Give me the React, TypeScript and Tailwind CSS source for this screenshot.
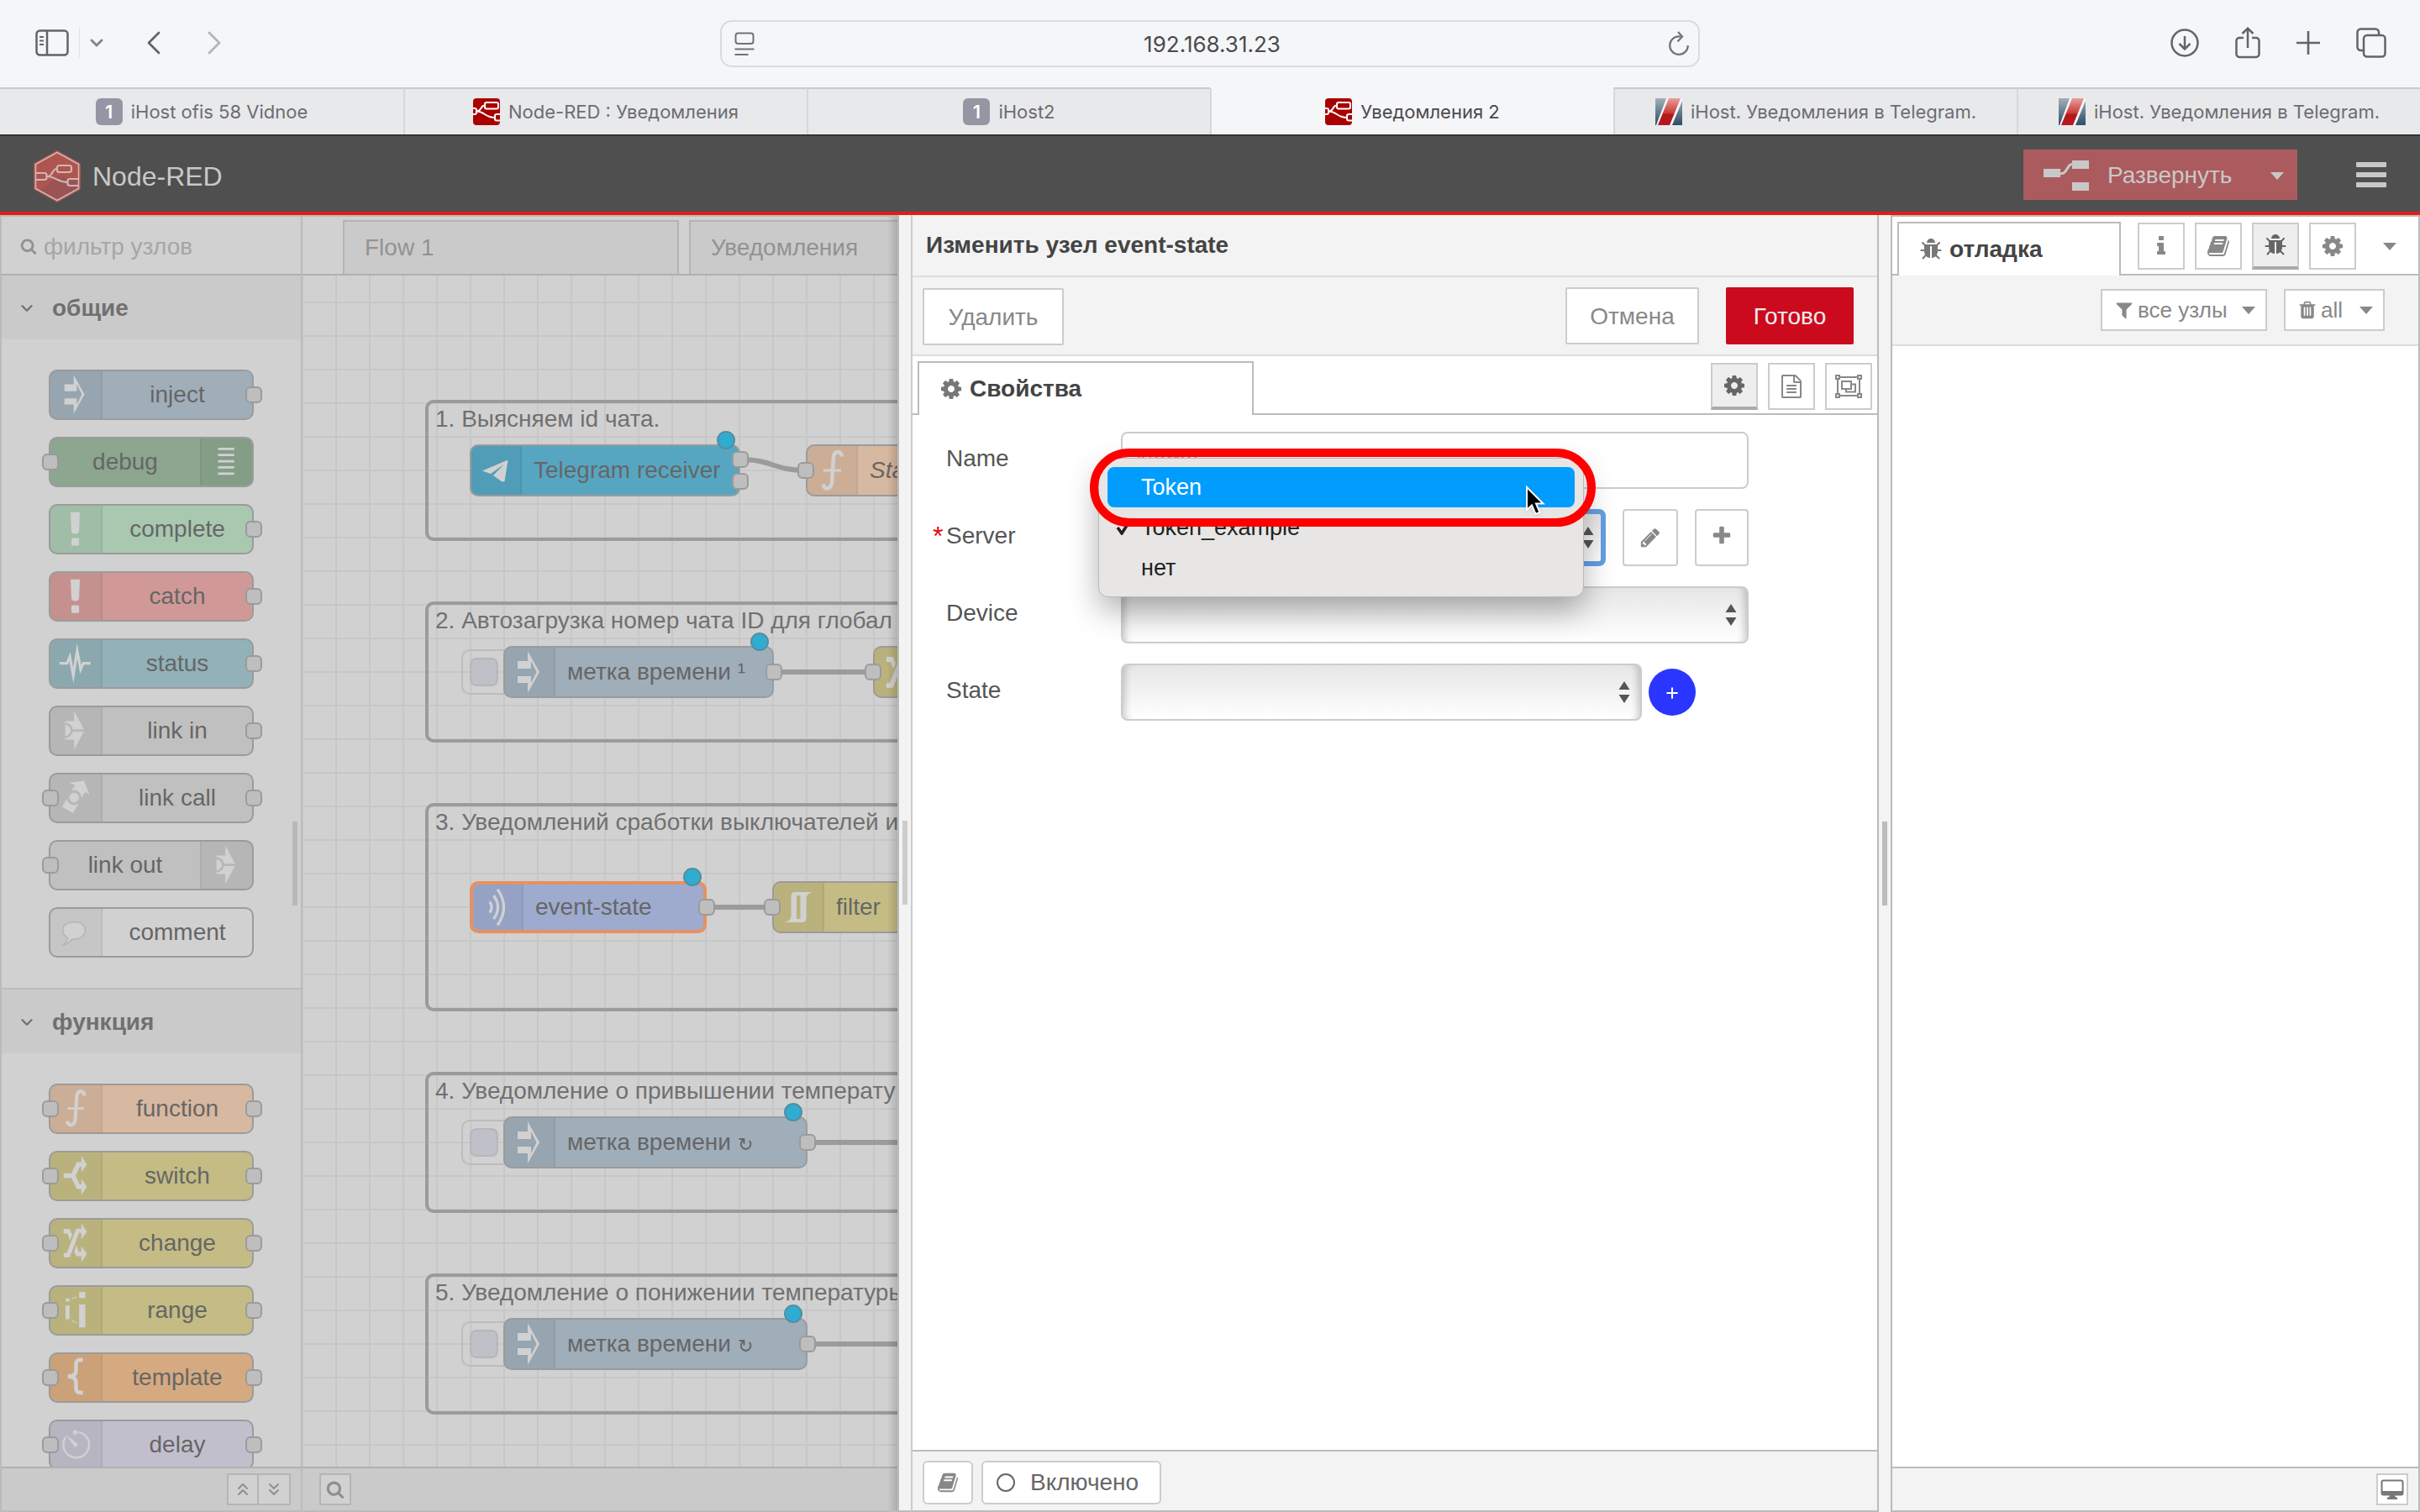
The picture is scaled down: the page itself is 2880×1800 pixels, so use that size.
import type { ReactNode } from "react";
import {
  ChevronDown,
  ChevronLeft,
  ChevronRight,
  ChevronsDown,
  ChevronsUp,
  Plus,
} from "lucide-react";

type IconName =
  | "inject"
  | "debug"
  | "alert"
  | "status"
  | "link"
  | "linkCall"
  | "comment"
  | "function"
  | "switch"
  | "change"
  | "range"
  | "template"
  | "delay"
  | "telegram"
  | "event"
  | "filter";

interface PaletteNode {
  label: string;
  icon: IconName;
  color: string;
  input?: boolean;
  output?: boolean;
  iconRight?: boolean;
}

interface FlowNode {
  label: string;
  icon: IconName;
  color: string;
  x: number;
  y: number;
  width: number;
  inputs?: number;
  outputs?: number;
  button?: boolean;
  italic?: boolean;
  selected?: boolean;
  changed?: boolean;
  repeat?: boolean;
}

const COMMON_NODES: PaletteNode[] = [
  { label: "inject", icon: "inject", color: "bg-[#a0aeba]", output: true },
  { label: "debug", icon: "debug", color: "bg-[#8ca68f]", input: true, iconRight: true },
  { label: "complete", icon: "alert", color: "bg-[#a8c8b0]", output: true },
  { label: "catch", icon: "alert", color: "bg-[#d09997]", output: true },
  { label: "status", icon: "status", color: "bg-[#92b1b8]", output: true },
  { label: "link in", icon: "link", color: "bg-[#c0c0c0]", output: true },
  { label: "link call", icon: "linkCall", color: "bg-[#c0c0c0]", input: true, output: true },
  { label: "link out", icon: "link", color: "bg-[#c0c0c0]", input: true, iconRight: true },
  { label: "comment", icon: "comment", color: "bg-[#d1d1d1]" },
];

const FUNCTION_NODES: PaletteNode[] = [
  { label: "function", icon: "function", color: "bg-[#d7b8a0]", input: true, output: true },
  { label: "switch", icon: "switch", color: "bg-[#c4bc84]", input: true, output: true },
  { label: "change", icon: "change", color: "bg-[#c4bc84]", input: true, output: true },
  { label: "range", icon: "range", color: "bg-[#c4bc84]", input: true, output: true },
  { label: "template", icon: "template", color: "bg-[#d5aa80]", input: true, output: true },
  { label: "delay", icon: "delay", color: "bg-[#c2bfcd]", input: true, output: true },
];

// Canvas coordinates, origin at the top left corner of the flow
const GROUPS = [
  { label: "1. Выясняем id чата.", y: 148, height: 168 },
  { label: "2. Автозагрузка номер чата ID для глобал", y: 388, height: 168 },
  { label: "3. Уведомлений сработки выключателей и", y: 628, height: 248 },
  { label: "4. Уведомление о привышении температу", y: 948, height: 168 },
  { label: "5. Уведомление о понижении температуры", y: 1188, height: 168 },
];

const WIRES = [
  "M520 219 C560 219 560 232 600 232",
  "M560 472 H680",
  "M480 752 H560",
  "M600 1032 H760",
  "M600 1272 H760",
];

const FLOW_NODES: FlowNode[] = [
  { label: "Telegram receiver", icon: "telegram", color: "bg-[#56a6c2]", x: 200, y: 202, width: 320, outputs: 2, changed: true },
  { label: "Sta", icon: "function", color: "bg-[#d7b8a0]", x: 600, y: 202, width: 240, inputs: 1, italic: true },
  { label: "метка времени ¹", icon: "inject", color: "bg-[#a0aeba]", x: 240, y: 442, width: 320, outputs: 1, button: true, changed: true },
  { label: "", icon: "change", color: "bg-[#c4bc84]", x: 680, y: 442, width: 240, inputs: 1 },
  { label: "event-state", icon: "event", color: "bg-[#9eabcf]", x: 200, y: 722, width: 280, outputs: 1, selected: true, changed: true },
  { label: "filter", icon: "filter", color: "bg-[#c4bc84]", x: 560, y: 722, width: 200, inputs: 1 },
  { label: "метка времени", icon: "inject", color: "bg-[#a0aeba]", x: 240, y: 1002, width: 360, outputs: 1, button: true, changed: true, repeat: true },
  { label: "метка времени", icon: "inject", color: "bg-[#a0aeba]", x: 240, y: 1242, width: 360, outputs: 1, button: true, changed: true, repeat: true },
];

const BROWSER_TABS = [
  { title: "iHost ofis 58 Vidnoe", icon: "one" },
  { title: "Node-RED : Уведомления", icon: "nodered" },
  { title: "iHost2", icon: "one" },
  { title: "Уведомления 2", icon: "nodered", active: true },
  { title: "iHost. Уведомления в Telegram.", icon: "stripes" },
  { title: "iHost. Уведомления в Telegram.", icon: "stripes" },
];

const FA = {
  cog: "M1152 896q0-106-75-181t-181-75-181 75-75 181 75 181 181 75 181-75 75-181zm512-109v222q0 12-8 23t-20 13l-185 28q-19 54-39 91 35 50 107 138 10 12 10 25t-9 23q-27 37-99 108t-94 71q-12 0-26-9l-138-108q-44 23-91 38-16 136-29 186-7 28-36 28h-222q-14 0-24.5-8.5t-11.500-21.500l-28-184q-49-16-90-37l-141 107q-10 9-25 9-14 0-25-11-126-114-165-168-7-10-7-23 0-12 8-23 15-21 51-66.500t54-70.500q-27-50-41-99l-183-27q-13-2-21-12.500t-8-23.500v-222q0-12 8-23t19-13l186-28q14-46 39-92-40-57-107-138-10-12-10-24 0-10 9-23 26-36 98.500-107.500t94.500-71.500q13 0 26 10l138 107q44-23 91-38 16-136 29-186 7-28 36-28h222q14 0 24.500 8.500t11.500 21.500l28 184q49 16 90 37l142-107q9-9 24-9 13 0 25 10 129 119 165 170 7 8 7 22 0 12-8 23-15 21-51 66.500t-54 70.500q26 50 41 98l183 28q13 2 21 12.500t8 23.500z",
  bug: "M1696 960q0 26-19 45t-45 19h-224q0 171-67 290l208 209q19 19 19 45t-19 45q-18 19-45 19t-45-19l-198-197q-5 5-15 13t-42 28.500-65 36.500-82 29-97 13v-896h-128v896q-51 0-101.500-13.500t-87-33-66-39-43.500-32.500l-15-14-183 207q-20 21-48 21-24 0-43-16-19-18-20.500-44.500t15.500-46.500l202-227q-58-114-58-274h-224q-26 0-45-19t-19-45 19-45 45-19h224v-294l-173-173q-19-19-19-45t19-45 45-19 45 19l173 173h844l173-173q19-19 45-19t45 19 19 45-19 45l-173 173v294h224q26 0 45 19t19 45zm-480-576h-640q0-133 93.500-226.500t226.500-93.500 226.500 93.500 93.500 226.500z",
  info: "M1216 1344v128q0 26-19 45t-45 19h-512q-26 0-45-19t-19-45v-128q0-26 19-45t45-19h64v-384h-64q-26 0-45-19t-19-45v-128q0-26 19-45t45-19h384q26 0 45 19t19 45v576h64q26 0 45 19t19 45zm-128-1152v192q0 26-19 45t-45 19h-256q-26 0-45-19t-19-45v-192q0-26 19-45t45-19h256q26 0 45 19t19 45z",
  book: "M1703 478q40 57 18 129l-275 906q-19 64-76.500 107.500t-122.500 43.500h-923q-77 0-148.500-53.500t-99.500-131.500q-24-67-2-127 0-4 3-27t4-37q1-8-3-21.500t-3-19.500q2-11 8-21t16.500-23.500 16.500-23.500q23-38 45-91.500t30-91.500q3-10 .5-30t-.5-28q3-11 17-28t17-23q21-36 42-92t25-90q1-9-2.500-32t.5-28q4-13 22-30.500t22-22.500q19-26 42.500-84.500t27.500-96.500q1-8-3-25.500t-2-26.500q2-8 9-18t18-23 17-21q8-12 16.500-30.500t15-35 16-36 19.500-32 26.500-23.500 36-11.500 47.500 5.500l-1 3q38-9 51-9h761q74 0 114 56t18 130l-274 906q-36 119-71.500 153.500t-128.500 34.500h-869q-27 0-38 15-11 16-1 43 24 70 144 70h923q29 0 56-15.500t35-41.500l300-987q7-22 5-57 38 15 59 43zm-1064 2q-4 13 2 22.500t20 9.500h608q13 0 25.500-9.500t16.500-22.500l21-64q4-13-2-22.500t-20-9.500h-608q-13 0-25.500 9.500t-16.500 22.500zm-83 256q-4 13 2 22.500t20 9.500h608q13 0 25.500-9.500t16.500-22.500l21-64q4-13-2-22.500t-20-9.500h-608q-13 0-25.500 9.500t-16.500 22.500z",
  filter: "M1595 295q17 41-14 70l-493 493v742q0 42-39 59-13 5-25 5-27 0-45-19l-256-256q-19-19-19-45v-486l-493-493q-31-29-14-70 17-39 59-39h1280q42 0 59 39z",
  trash: "M704 1376v-704q0-14-9-23t-23-9h-64q-14 0-23 9t-9 23v704q0 14 9 23t23 9h64q14 0 23-9t9-23zm256 0v-704q0-14-9-23t-23-9h-64q-14 0-23 9t-9 23v704q0 14 9 23t23 9h64q14 0 23-9t9-23zm256 0v-704q0-14-9-23t-23-9h-64q-14 0-23 9t-9 23v704q0 14 9 23t23 9h64q14 0 23-9t9-23zm-544-992h448l-48-117q-7-9-17-11h-317q-10 2-17 11zm928 32v64q0 14-9 23t-23 9h-96v948q0 83-47 143.500t-113 60.500h-832q-66 0-113-58.500t-47-141.500v-952h-96q-14 0-23-9t-9-23v-64q0-14 9-23t23-9h309l70-167q15-37 54-63t79-26h320q40 0 79 26t54 63l70 167h309q14 0 23 9t9 23z",
  pencil: "M491 1536l91-91-235-235-91 91v107h128v128h107zm523-928q0-22-22-22-10 0-17 7l-542 542q-7 7-7 17 0 22 22 22 10 0 17-7l542-542q7-7 7-17zm-54-192l416 416-832 832h-416v-416zm683 96q0 53-37 90l-166 166-416-416 166-165q36-38 90-38 53 0 91 38l235 234q37 39 37 91z",
  plus: "M1600 736v192q0 40-28 68t-68 28h-416v416q0 40-28 68t-68 28h-192q-40 0-68-28t-28-68v-416h-416q-40 0-68-28t-28-68v-192q0-40 28-68t68-28h416v-416q0-40 28-68t68-28h192q40 0 68 28t28 68v416h416q40 0 68 28t28 68z",
  search: "M1216 832q0-185-131.500-316.500t-316.500-131.500-316.500 131.500-131.500 316.500 131.500 316.500 316.500 131.500 316.500-131.500 131.500-316.500zm512 832q0 52-38 90t-90 38q-54 0-90-38l-343-342q-179 124-399 124-143 0-273.500-55.500t-225-150-150-225-55.500-273.500 55.500-273.500 150-225 225-150 273.500-55.500 273.500 55.500 225 150 150 225 55.500 273.500q0 220-124 399l343 343q37 37 37 90z",
  file: "M1596 380q28 28 48 76t20 88v1152q0 40-28 68t-68 28h-1344q-40 0-68-28t-28-68v-1600q0-40 28-68t68-28h896q40 0 88 20t76 48zm-444-244v376h376q-10-29-22-41l-313-313q-12-12-41-22zm384 1528v-1024h-416q-40 0-68-28t-28-68v-416h-768v1536h1280zm-1024-864q0-14 9-23t23-9h704q14 0 23 9t9 23v64q0 14-9 23t-23 9h-704q-14 0-23-9t-9-23v-64zm736 224q14 0 23 9t9 23v64q0 14-9 23t-23 9h-704q-14 0-23-9t-9-23v-64q0-14 9-23t23-9h704zm0 256q14 0 23 9t9 23v64q0 14-9 23t-23 9h-704q-14 0-23-9t-9-23v-64q0-14 9-23t23-9h704z",
};

function Fa({ name, className = "size-7" }: { name: keyof typeof FA; className?: string }) {
  return (
    <svg viewBox="0 0 1792 1792" className={`shrink-0 ${className}`} fill="currentColor" aria-hidden="true">
      <path d={FA[name]} />
    </svg>
  );
}

function Caret({ className = "" }: { className?: string }) {
  return (
    <svg viewBox="0 0 16 9" className={`h-[9px] w-4 shrink-0 ${className}`} fill="currentColor" aria-hidden="true">
      <path d="M0 0h16L8 9z" />
    </svg>
  );
}

const NODE_ICONS: Record<IconName, ReactNode> = {
  inject: <path d="M16 17h12V5l14 25-14 25V43H16v-8h16v8l6.500-13L32 17v9H16z" />,
  debug: <path d="M19 12h21v3H19zM19 20h21v3H19zM19 28h21v3H19zM19 36h21v3H19zM19 44h21v3H19z" />,
  alert: (
    <>
      <path d="M24 8.500h12l-1 24q-.5 4-4 4h-2q-3.500 0-4-4z" />
      <rect x="25" y="42" width="10" height="10" rx="2" />
    </>
  ),
  status: (
    <path
      d="M9.500 30H19.500L23 21.500L27.500 46L32.500 14L37 38L40.500 30H50"
      fill="none"
      stroke="#d1d1d1"
      strokeWidth="3.500"
      strokeMiterlimit="20"
    />
  ),
  link: (
    <>
      <path d="M17 18h11.500V5L42 30 28.500 55V42H17z" />
      <path d="M17 21.500a8.500 8.500 0 0 1 0 17M25.500 30H44" fill="none" stroke="#b7b7b7" strokeWidth="3" />
    </>
  ),
  linkCall: (
    <>
      <path d="M19.500 31l14.500 7.500-7 11.500-14-8z" />
      <path d="M22 10.500l19.500-2.200 7 18.200-5.500-4-6 9.500-11.500-12 4.500-6z" />
      <circle cx="28.500" cy="30" r="8" stroke="#b7b7b7" strokeWidth="3.500" />
    </>
  ),
  comment: (
    <path
      d="M20 37.500C10 32 11 17 29.500 17S47 38 29.500 39.500H26Q20 46 14 46.500Q20 42 20 37.500z"
      stroke="#b2b2b2"
      strokeWidth="1.500"
    />
  ),
  function: (
    <g fill="none" stroke="#d1d1d1">
      <path d="M42 13.500C41 6 33 6 32 14L30 44C29 53 21 54 19.500 46.500" strokeWidth="4.500" />
      <path d="M20 30h21" strokeWidth="3" />
    </g>
  ),
  switch: (
    <>
      <path d="M15 30H28M26.500 31L34 15.500H40M26.500 29L34 44.500H40" fill="none" stroke="#d1d1d1" strokeWidth="6" />
      <path d="M38 5l7 10.500-7 10.500zM38 34l7 10.500L38 55z" />
    </>
  ),
  change: (
    <>
      <path d="M15 46h6L33 14.500h6" fill="none" stroke="#d1d1d1" strokeWidth="5.500" />
      <path d="M15 12h8l3 8-3 7-3-9h-5zM28.500 42l3-9 3 8.500h5v6h-8z" />
      <path d="M38 5l7 10.500-7 10.500zM38 34l7 10.500L38 55z" />
    </>
  ),
  range: (
    <>
      <path d="M17.500 15h5v4h-5zM17.500 24h5v18h-5zM35 6.500h8v8h-8zM35 23h8v29.500h-8z" />
      <path d="M25.500 15.500l6.500-2.500M25.500 43.500L32 47" stroke="#d1d1d1" strokeWidth="1.200" />
    </>
  ),
  template: (
    <path
      d="M40 7.500h-3q-6 0-6 6v8q0 7-10.500 7.500Q31 29.500 31 36v8q0 6 6 6h3"
      fill="none"
      stroke="#d1d1d1"
      strokeWidth="5"
    />
  ),
  delay: (
    <>
      <path d="M34.500 14a16.700 16.700 0 1 1-17 7" fill="none" stroke="#d1d1d1" strokeWidth="2.600" />
      <circle cx="30" cy="14.500" r="3" />
      <path d="M17.500 17l15 11.500a2.800 2.800 0 0 1-4 4z" />
    </>
  ),
  telegram: <path d="M14 30.500L44.500 17.500 40.500 43l-3 .5L27 36l13-13.500L24 34z" />,
  event: (
    <path
      d="M20 23q5 7 0 14M25 15q11 15 0 30M30 7q16 23 0 46"
      fill="none"
      stroke="#d1d1d1"
      strokeWidth="3.500"
    />
  ),
  filter: <path fillRule="evenodd" d="M13.500 48q7-1.500 8-7V17q0-5 5-5h21q-7 1.500-8 7v24q0 5-5 5zM28 17q0-1 1-1h3.500v27q0 1-1 1H28z" />,
};

function Port({ className }: { className: string }) {
  return (
    <span className={`absolute size-5 rounded-md border-2 border-[#9b9b9b] bg-[#bebebe] ${className}`} />
  );
}

function PaletteItem({ node }: { node: PaletteNode }) {
  return (
    <li
      className={`relative flex h-[60px] w-[244px] rounded-[10px] border-2 border-[#9b9b9b] ${node.color} ${
        node.iconRight ? "flex-row-reverse" : ""
      }`}
    >
      <span
        className={`box-content w-[60px] bg-black/5 ${
          node.iconRight ? "rounded-r-lg border-l-2 border-black/5" : "rounded-l-lg border-r-2 border-black/5"
        }`}
      >
        <svg viewBox="-2 0 65 61" className="h-14 w-[60px]" fill="#d1d1d1" aria-hidden="true">
          {NODE_ICONS[node.icon]}
        </svg>
      </span>
      <span className="flex-1 text-center text-[28px] leading-[56px] text-[#666]">{node.label}</span>
      {node.input && <Port className="top-[18px] -left-[10px]" />}
      {node.output && <Port className="top-[18px] -right-[12px]" />}
    </li>
  );
}

function PaletteCategory({ title, nodes }: { title: string; nodes: PaletteNode[] }) {
  return (
    <section className="shrink-0 border-b-2 border-[#bbb]">
      <h2>
        <button
          type="button"
          className="flex h-[76px] w-full items-center gap-5 bg-[#cacaca] pt-0.5 pl-5 text-[28px] font-bold text-[#707070]"
        >
          <ChevronDown className="size-5 scale-110" strokeWidth={2.5} />
          {title}
        </button>
      </h2>
      <ul className="flex flex-col gap-5 py-9 pl-14">
        {nodes.map((node) => (
          <PaletteItem key={node.label} node={node} />
        ))}
      </ul>
    </section>
  );
}

function Palette() {
  return (
    <aside className="relative flex w-[360px] shrink-0 flex-col border-2 border-[#bbb] bg-[#d1d1d1]">
      <label className="flex h-[70px] shrink-0 items-center gap-2 border-b-2 border-[#b0b0b0] pt-0.5 pl-[22px] text-[#929292]">
        <Fa name="search" className="size-5" />
        <input
          type="search"
          placeholder="фильтр узлов"
          aria-label="фильтр узлов"
          className="w-[280px] bg-transparent pt-0.5 text-[28px] outline-none placeholder:text-[#a6a6a6]"
        />
      </label>
      <div className="flex min-h-0 flex-1 flex-col overflow-hidden">
        <PaletteCategory title="общие" nodes={COMMON_NODES} />
        <PaletteCategory title="функция" nodes={FUNCTION_NODES} />
      </div>
      <span className="absolute top-[720px] right-1 h-[100px] w-1.5 bg-[#b8b8b8]" />
      <footer className="relative flex h-[52px] shrink-0 items-center justify-end border-t-2 border-[#b0b0b0] bg-[#cacaca] pr-3 text-[#8f8f8f]">
        <button type="button" aria-label="Свернуть все" className="flex h-[38px] w-[38px] items-center justify-center border-2 border-[#b5b5b5] bg-[#d1d1d1]">
          <ChevronsUp className="size-6" strokeWidth={2} />
        </button>
        <button type="button" aria-label="Развернуть все" className="flex h-[38px] w-[38px] items-center justify-center border-2 border-l-0 border-[#b5b5b5] bg-[#d1d1d1]">
          <ChevronsDown className="size-6" strokeWidth={2} />
        </button>
      </footer>
    </aside>
  );
}

function CanvasNode({ node }: { node: FlowNode }) {
  return (
    <div
      className="absolute h-[62px]"
      style={{ left: node.x - 1, top: node.y - 1, width: node.width + 2 }}
    >
      {node.button && (
        <span className="absolute top-1 -left-[50px] h-[54px] w-[60px] rounded-[10px] border-2 border-[#bcbcbc] p-2">
          <span className="block size-[34px] rounded-lg border-2 border-[#b7b7bb] bg-[#bfc0c8]" />
        </span>
      )}
      <div
        className={`relative flex size-full rounded-[10px] ${node.color} ${
          node.selected ? "border-4 border-[#e8905f]" : "border-2 border-[#9b9b9b]"
        }`}
      >
        <span className="w-[60px] shrink-0 rounded-l-lg border-r-2 border-black/5 bg-black/5">
          <svg viewBox="1 1 60 58" className="h-full w-[60px]" fill="#d1d1d1" aria-hidden="true">
            {NODE_ICONS[node.icon]}
          </svg>
        </span>
        <span
          className={`flex items-center gap-2 pl-[14px] text-[28px] whitespace-nowrap text-[#666] ${
            node.italic ? "italic" : ""
          }`}
        >
          {node.label}
          {node.repeat && <span className="pt-1 text-[22px]">↻</span>}
        </span>
      </div>
      {node.inputs === 1 && <Port className="top-[21px] -left-[10px]" />}
      {node.outputs === 1 && <Port className="top-[21px] -right-[10px]" />}
      {node.outputs === 2 && (
        <>
          <Port className="top-2 -right-[10px]" />
          <Port className="top-[34px] -right-[10px]" />
        </>
      )}
      {node.changed && (
        <span className="absolute -top-4 right-[6px] size-[22px] rounded-full border-2 border-[#548da3] bg-[#2fadd1]" />
      )}
    </div>
  );
}

function Workspace() {
  return (
    <main className="relative flex min-w-0 flex-1 flex-col overflow-hidden border-y-2 border-[#bbb] bg-[#d1d1d1]">
      <div role="tablist" className="flex h-[70px] shrink-0 items-end gap-3 border-b-2 border-[#b0b0b0] pl-12">
        {["Flow 1", "Уведомления"].map((title) => (
          <button
            key={title}
            type="button"
            role="tab"
            className="h-16 w-[400px] shrink-0 border-2 border-b-0 border-[#b3b3b3] bg-[#cacaca] pl-6 text-left text-[28px] text-[#929292]"
          >
            {title}
          </button>
        ))}
      </div>
      <div className="relative flex-1 overflow-hidden bg-[#d1d1d1] bg-[linear-gradient(#c7c7c7_2px,transparent_2px),linear-gradient(90deg,#c7c7c7_2px,transparent_2px)] bg-[length:40px_40px] bg-[position:-1px_31px]">
        {GROUPS.map((group) => (
          <div
            key={group.label}
            className="absolute left-[146px] w-[900px] rounded-[10px] border-4 border-[#9b9b9b] pl-2 text-[28px] leading-[38px] whitespace-nowrap text-[#707070]"
            style={{ top: group.y, height: group.height }}
          >
            {group.label}
          </div>
        ))}
        <svg className="absolute inset-0 size-full" fill="none" stroke="#9b9b9b" strokeWidth="6" aria-hidden="true">
          {WIRES.map((d) => (
            <path key={d} d={d} />
          ))}
        </svg>
        {FLOW_NODES.map((node) => (
          <CanvasNode key={`${node.x}-${node.y}`} node={node} />
        ))}
      </div>
      <footer className="flex h-[52px] shrink-0 items-center border-t-2 border-[#b0b0b0] bg-[#cacaca] pl-5">
        <button type="button" aria-label="Поиск" className="flex size-[38px] items-center justify-center border-2 border-[#b5b5b5] bg-[#d1d1d1] text-[#8f8f8f]">
          <Fa name="search" className="size-[22px]" />
        </button>
      </footer>
      <span className="absolute inset-y-0 right-0 w-3 bg-gradient-to-r from-transparent to-black/15" />
    </main>
  );
}

function SpinArrows({ className }: { className: string }) {
  return (
    <svg viewBox="0 0 14 26" className={`pointer-events-none absolute h-[26px] w-[14px] text-[#555] ${className}`} fill="currentColor" aria-hidden="true">
      <path d="M7 0l6.500 10H.5zM7 26L.5 16h13z" />
    </svg>
  );
}

function FieldRow({ id, label, required, children }: { id: string; label: string; required?: boolean; children: ReactNode }) {
  return (
    <div className="flex h-[68px] items-center text-[28px] text-[#555]">
      <span className="w-4 pb-1 text-[32px] text-red-600">{required ? "*" : ""}</span>
      <label htmlFor={id} className="w-52 pb-1">
        {label}
      </label>
      <div className="relative flex h-full w-[747px] items-center">{children}</div>
    </div>
  );
}

function ServerMenu() {
  return (
    <>
      <ul
        role="listbox"
        aria-label="Server"
        className="absolute -top-[61px] -left-[27px] z-10 h-[166px] w-[578px] rounded-xl border border-[#b9b9b9] bg-[#e8e6e4] px-[10px] pt-[10px] text-[27px] leading-[48px] text-[#222] shadow-[0_16px_36px_rgba(0,0,0,0.3)]"
      >
        <li role="option" aria-selected="false" className="rounded-lg bg-[#009dff] pl-10 text-white">
          Token
        </li>
        <li role="option" aria-selected="true" className="flex items-center pl-[10px]">
          <svg viewBox="0 0 18 18" className="mr-3 size-[18px]" fill="none" stroke="currentColor" strokeWidth="3.500" aria-hidden="true">
            <path d="M2 9l5 7L16 2" />
          </svg>
          Token_example
        </li>
        <li role="option" aria-selected="false" className="pl-10">
          нет
        </li>
      </ul>
      <span className="absolute -top-[72px] -left-[37px] z-20 h-[93px] w-[602px] rounded-full border-[10px] border-[#ff0000]" />
      <svg viewBox="0 0 24 36" className="absolute -top-7 left-[481px] z-30 h-9 w-6 drop-shadow" aria-hidden="true">
        <path d="M2 2v27l6-5.500 4.500 10.500 5-2-4.500-10.500h8.500z" fill="#000" stroke="#fff" strokeWidth="2" />
      </svg>
    </>
  );
}

const selectClass =
  "h-full appearance-none rounded-lg border-2 border-[#ccc] bg-gradient-to-b from-[#e6e6e6] to-white shadow-[inset_10px_0_8px_-7px_rgba(0,0,0,0.2),inset_-10px_0_8px_-7px_rgba(0,0,0,0.2)]";

function TrayIconButton({ label, active, children }: { label: string; active?: boolean; children: ReactNode }) {
  return (
    <button
      type="button"
      aria-label={label}
      className={`flex size-14 items-center justify-center border-2 border-[#ccc] ${
        active ? "border-b-4 border-b-[#aaa] bg-[#eee] text-[#666]" : "bg-white text-[#888]"
      }`}
    >
      {children}
    </button>
  );
}

function EditTray() {
  return (
    <section className="flex w-[1152px] shrink-0 flex-col border-r-2 border-b-2 border-l-2 border-r-[#bbb] border-b-[#bbb] border-l-[#ccc] bg-white">
      <header className="flex h-[74px] shrink-0 items-center border-b-2 border-[#ddd] bg-[#f3f3f3] pl-4">
        <h1 className="text-[28px] font-bold text-[#444]">Изменить узел event-state</h1>
      </header>
      <div className="flex h-[94px] shrink-0 items-center justify-between border-b-2 border-[#ddd] bg-[#f3f3f3] pr-7 pl-3 text-[28px] text-[#888]">
        <button type="button" className="mt-0.5 h-[68px] w-[168px] rounded-xs border-2 border-[#ccc] bg-white pt-0.5">
          Удалить
        </button>
        <div className="flex gap-8">
          <button type="button" className="h-[68px] w-[159px] rounded-xs border-2 border-[#ccc] bg-white pt-0.5">
            Отмена
          </button>
          <button type="button" className="h-[68px] w-[152px] rounded-xs bg-[#cc0a1e] pt-0.5 text-[#eee]">
            Готово
          </button>
        </div>
      </div>
      <div className="flex h-[70px] shrink-0 items-end">
        <span className="w-1.5 self-stretch border-b-2 border-[#bbb]" />
        <button
          type="button"
          className="flex h-16 w-[400px] items-center gap-2 border-2 border-b-0 border-[#bbb] bg-white pl-6 text-[28px] font-bold text-[#444]"
        >
          <Fa name="cog" className="size-7 text-[#777]" />
          Свойства
        </button>
        <div className="flex flex-1 items-center justify-end gap-3 self-stretch border-b-2 border-[#bbb] pt-1 pr-1.5">
          <TrayIconButton label="Свойства" active>
            <Fa name="cog" />
          </TrayIconButton>
          <TrayIconButton label="Описание">
            <Fa name="file" />
          </TrayIconButton>
          <TrayIconButton label="Оформление">
            <svg viewBox="0 0 32 28" className="h-7 w-8" fill="none" stroke="currentColor" strokeWidth="2" aria-hidden="true">
              <path d="M3 3h26v22H3z" />
              <path d="M8 8h11v9H8z" />
              <path d="M19 11.500h5V20.500H13V17" />
              <path d="M1 1h4v4H1zM27 1h4v4h-4zM1 23h4v4H1zM27 23h4v4h-4z" fill="#fff" />
            </svg>
          </TrayIconButton>
        </div>
      </div>

      <form className="flex flex-1 flex-col gap-6 px-6 pt-5">
        <FieldRow id="node-name" label="Name">
          <input
            id="node-name"
            placeholder="Name"
            className="size-full rounded-lg border-2 border-[#ccc] px-4 outline-none placeholder:text-[#aaa]"
          />
        </FieldRow>
        <FieldRow id="node-server" label="Server" required>
          <div className="relative h-full w-[577px]">
            <select
              id="node-server"
              className="size-full appearance-none rounded-lg border-6 border-[#659fe6] bg-gradient-to-b from-[#e6e6e6] to-white"
            />
            <SpinArrows className="top-[21px] right-[14px]" />
          </div>
          <button type="button" aria-label="Изменить" className="ml-5 flex h-[68px] w-[66px] items-center justify-center rounded border-2 border-[#ccc] bg-white text-[#888]">
            <Fa name="pencil" className="size-[26px]" />
          </button>
          <button type="button" aria-label="Добавить" className="ml-5 flex h-[68px] w-16 items-center justify-center rounded border-2 border-[#ccc] bg-white pb-1 text-[#888]">
            <Fa name="plus" className="size-[26px]" />
          </button>
          <ServerMenu />
        </FieldRow>
        <FieldRow id="node-device" label="Device">
          <select id="node-device" className={`w-full ${selectClass}`} />
          <SpinArrows className="top-[21px] right-[14px]" />
        </FieldRow>
        <FieldRow id="node-state" label="State">
          <div className="relative h-full w-[620px]">
            <select id="node-state" className={`w-full ${selectClass}`} />
            <SpinArrows className="top-[21px] right-[14px]" />
          </div>
          <button type="button" aria-label="Добавить состояние" className="ml-2 flex size-14 items-center justify-center rounded-full bg-[#2a36ff] pt-0.5 text-white">
            <Plus className="size-5" strokeWidth={2.5} />
          </button>
        </FieldRow>
      </form>

      <footer className="flex h-[72px] shrink-0 items-center gap-[10px] border-t-2 border-[#bbb] bg-[#f3f3f3] pt-1 pl-3">
        <button type="button" aria-label="Справка" className="flex h-[52px] w-[60px] items-center justify-center rounded-md border-2 border-[#ccc] bg-white text-[#888]">
          <Fa name="book" className="size-[26px]" />
        </button>
        <button type="button" className="flex h-[52px] w-[214px] items-center gap-[18px] rounded-md border-2 border-[#ccc] bg-white pl-4 text-[28px] text-[#666]">
          <span className="size-[22px] rounded-full border-2 border-[#666]" />
          Включено
        </button>
      </footer>
    </section>
  );
}

function Sidebar() {
  return (
    <aside className="flex w-[630px] shrink-0 flex-col border-2 border-[#bbb] bg-white">
      <div className="flex h-[70px] shrink-0 items-end">
        <span className="w-1.5 self-stretch border-b-2 border-[#bbb]" />
        <button
          type="button"
          className="flex h-16 w-[266px] items-center gap-2 border-2 border-b-0 border-[#bbb] bg-white pl-6 text-[28px] font-bold text-[#444]"
        >
          <Fa name="bug" className="size-7 text-[#777]" />
          отладка
        </button>
        <div className="flex flex-1 items-center justify-end gap-3 self-stretch border-b-2 border-[#bbb] pt-0.5 pr-[26px]">
          <TrayIconButton label="Информация">
            <Fa name="info" />
          </TrayIconButton>
          <TrayIconButton label="Справка">
            <Fa name="book" />
          </TrayIconButton>
          <TrayIconButton label="Отладка" active>
            <Fa name="bug" />
          </TrayIconButton>
          <TrayIconButton label="Конфигурация">
            <Fa name="cog" />
          </TrayIconButton>
          <button type="button" aria-label="Ещё" className="ml-5 text-[#888]">
            <Caret />
          </button>
        </div>
      </div>
      <div className="flex h-[84px] shrink-0 items-center justify-end gap-5 border-b-2 border-[#ddd] bg-[#f3f3f3] pr-10 text-[26px] text-[#888]">
        <button type="button" className="flex h-[50px] w-[198px] items-center gap-1 border-2 border-[#ccc] bg-white pr-3 pl-[14px]">
          <Fa name="filter" className="size-6" />
          все узлы
          <Caret className="ml-auto" />
        </button>
        <button type="button" className="flex h-[50px] w-[120px] items-center gap-1 border-2 border-[#ccc] bg-white pr-3 pl-[14px]">
          <Fa name="trash" className="size-6" />
          all
          <Caret className="ml-auto" />
        </button>
      </div>
      <div className="flex-1" />
      <footer className="flex h-[52px] shrink-0 items-center justify-end border-t-2 border-[#bbb] bg-[#f3f3f3] pr-3">
        <button type="button" aria-label="Открыть в окне" className="flex size-[38px] items-center justify-center border-2 border-[#ccc] bg-white text-[#777]">
          <svg viewBox="0 0 28 24" className="h-6 w-7" aria-hidden="true">
            <rect x="1.500" y="1.500" width="25" height="17" rx="2" fill="none" stroke="currentColor" strokeWidth="2" />
            <path d="M2 14h24v5H2zM11 19h6l1 3H10zM8 21.500h12V24H8z" fill="currentColor" />
          </svg>
        </button>
      </footer>
    </aside>
  );
}

function TabIcon({ kind }: { kind: string }) {
  if (kind === "one") {
    return (
      <span className="flex size-8 items-center justify-center rounded-md bg-[#9496a4] text-[22px] font-semibold text-white">
        1
      </span>
    );
  }
  if (kind === "nodered") {
    return (
      <svg viewBox="0 0 32 32" className="size-8" fill="none" stroke="#fff" strokeWidth="2" aria-hidden="true">
        <rect width="32" height="32" rx="4" fill="#a80000" stroke="none" />
        <rect x="14" y="5" width="16" height="7.500" rx="2" />
        <rect x="26" y="19" width="9" height="7.500" rx="2" />
        <rect x="-4" y="12" width="8" height="7" rx="2" />
        <path d="M4 15.500c7 0 4-7 10-7M4 15.500c10 0 10 7.500 22 7.500" />
      </svg>
    );
  }
  return (
    <svg viewBox="0 0 32 32" className="size-8" aria-hidden="true">
      <defs>
        <linearGradient id="stripe-red" x2="0" y2="1">
          <stop offset="0" stopColor="#e8a09c" />
          <stop offset=".55" stopColor="#c93a36" />
          <stop offset=".6" stopColor="#b3191a" />
        </linearGradient>
        <linearGradient id="stripe-blue" x2="0" y2="1">
          <stop offset="0" stopColor="#a3afb8" />
          <stop offset="1" stopColor="#2d4d67" />
        </linearGradient>
      </defs>
      <rect width="32" height="32" fill="#f4f4f6" />
      <path d="M0 0h13L1 32H0zM32 3v29H20z" fill="url(#stripe-blue)" />
      <path d="M16 0h14L17 32H3z" fill="url(#stripe-red)" />
    </svg>
  );
}

function BrowserChrome() {
  return (
    <div className="shrink-0 bg-[#f5f6f8] font-['Inter',sans-serif]">
      <div className="grid h-[104px] grid-cols-[1fr_1166px_1fr] items-center text-[#636466]">
        <div className="flex items-center pb-0.5 pl-[42px]">
          <button type="button" aria-label="Боковая панель">
            <svg viewBox="0 0 40 32" className="h-8 w-10" fill="none" stroke="currentColor" strokeWidth="2.500" aria-hidden="true">
              <rect x="1.500" y="1.500" width="37" height="29" rx="4" />
              <path d="M14 2v28" />
              <path d="M5 9h5M5 13.500h5M5 18h5" strokeWidth="2" />
            </svg>
          </button>
          <span className="ml-3 h-9 w-px bg-[#e0e1e3]" />
          <button type="button" aria-label="Группы вкладок" className="ml-2 text-[#85868a]">
            <ChevronDown className="size-6" strokeWidth={3} />
          </button>
          <button type="button" aria-label="Назад" className="ml-8">
            <ChevronLeft className="size-12" strokeWidth={1.4} />
          </button>
          <button type="button" aria-label="Вперёд" className="ml-6 text-[#b4b5b7]">
            <ChevronRight className="size-12" strokeWidth={1.4} />
          </button>
        </div>
        <div className="grid h-14 grid-cols-[1fr_auto_1fr] items-center rounded-[14px] border-2 border-[#dadbdd] pr-[10px] pl-[15px]">
          <svg viewBox="0 0 24 28" className="h-7 w-6" fill="none" stroke="#717275" strokeWidth="2" aria-hidden="true">
            <rect x="1.500" y="1.500" width="21" height="12.500" rx="3" />
            <path d="M.5 20.500h23M.5 27h16" />
          </svg>
          <span className="text-[26px] text-[#4a4a4c]">192.168.31.23</span>
          <button type="button" aria-label="Обновить" className="justify-self-end">
            <svg viewBox="0 0 26 30" className="h-[30px] w-[26px]" fill="none" stroke="#717275" strokeWidth="2.200" aria-hidden="true">
              <path d="M15 6.500A10.800 10.800 0 1 0 23.800 17" />
              <path d="M12 1l5 5.500-5.500 6" />
            </svg>
          </button>
        </div>
        <div className="flex items-center justify-end gap-[42px] pr-10 pb-0.5">
          <button type="button" aria-label="Загрузки">
            <svg viewBox="0 0 36 36" className="size-9" fill="none" stroke="currentColor" strokeWidth="2.500" aria-hidden="true">
              <circle cx="18" cy="18" r="15.500" />
              <path d="M18 10v15M11.500 19l6.500 6.500 6.500-6.500" />
            </svg>
          </button>
          <button type="button" aria-label="Поделиться">
            <svg viewBox="0 0 30 38" className="h-[38px] w-[30px]" fill="none" stroke="currentColor" strokeWidth="2.500" aria-hidden="true">
              <path d="M10 13H5a3.500 3.500 0 0 0-3.500 3.500v16A3.500 3.500 0 0 0 5 36h20a3.500 3.500 0 0 0 3.500-3.500v-16A3.500 3.500 0 0 0 25 13h-5M15 25V2M8.500 8L15 1.800 21.500 8" />
            </svg>
          </button>
          <button type="button" aria-label="Новая вкладка">
            <svg viewBox="0 0 30 30" className="size-[30px]" fill="none" stroke="currentColor" strokeWidth="2.600" aria-hidden="true">
              <path d="M15 1v28M1 15h28" />
            </svg>
          </button>
          <button type="button" aria-label="Обзор вкладок">
            <svg viewBox="0 0 36 36" className="size-9" fill="none" stroke="currentColor" strokeWidth="2.500" aria-hidden="true">
              <path d="M9 27H5.500A4 4 0 0 1 1.500 23V5.500a4 4 0 0 1 4-4H23a4 4 0 0 1 4 4V9" />
              <rect x="9" y="9" width="25.500" height="25.500" rx="4" />
            </svg>
          </button>
        </div>
      </div>
      <div role="tablist" className="grid h-14 grid-cols-6">
        {BROWSER_TABS.map((tab, i) => (
          <button
            key={i}
            type="button"
            role="tab"
            aria-selected={Boolean(tab.active)}
            className={`flex items-center justify-center gap-[10px] border-t-2 border-l-2 border-l-[#d6d7d9] text-[22px] first:border-l-0 ${
              tab.active
                ? "border-t-transparent text-[#4a4a4c]"
                : "border-t-[#c9cacc] bg-[#e8e9eb] text-[#6c6d70]"
            }`}
          >
            <TabIcon kind={tab.icon} />
            {tab.title}
          </button>
        ))}
      </div>
    </div>
  );
}

function AppHeader() {
  return (
    <header className="flex h-24 shrink-0 items-center border-t-2 border-b-4 border-t-[#333] border-b-[#e31b1b] bg-[#4f4f4f] pt-0.5 pr-10 pl-10 text-[#c8c8c8]">
      <a href="#" className="flex items-center gap-[14px] pt-1 text-[32px]">
        <svg viewBox="0 0 56 62" className="h-[62px] w-14" fill="none" stroke="#d3b5b3" strokeWidth="1.600" aria-hidden="true">
          <path d="M28 0l28 15.500v31L28 62 0 46.500v-31z" fill="#ae5550" stroke="none" />
          <path d="M28 31L56 36v10.500L28 62 6 49z" fill="#9b5353" stroke="none" />
          <path d="M28 2.500l25.500 14v29L28 59.500 2.500 45.500v-29z" />
          <g strokeWidth="2.200">
            <rect x="28" y="18" width="17" height="8" rx="2.500" />
            <path d="M2.500 27H13q2.500 0 2.500 2.500v3q0 2.500-2.500 2.500H2.500M53.500 34H43q-2.500 0-2.500 2.500v3q0 2.500 2.500 2.500h10.500" />
            <path d="M15.500 31c9 0 5-9 12.500-9M15.500 31c12 0 12 7 25 7" />
          </g>
        </svg>
        Node-RED
      </a>
      <div className="ml-auto flex items-center gap-[70px]">
        <button type="button" className="flex h-[60px] w-[326px] items-center bg-[#ab5b5e] pt-0.5 pl-6 text-[28px]">
          <svg viewBox="0 0 54 36" className="mr-[22px] h-9 w-[54px]" fill="currentColor" aria-hidden="true">
            <path d="M0 10h20v10H0zM34 0h20v10H34zM34 26h20v10H34z" />
            <path d="M19 15.500h3Q25 15.500 28 10t6-5.500" fill="none" stroke="currentColor" strokeWidth="3" />
          </svg>
          Развернуть
          <Caret className="mr-4 ml-auto" />
        </button>
        <button type="button" aria-label="Меню">
          <svg viewBox="0 0 36 30" className="h-[30px] w-9" fill="currentColor" aria-hidden="true">
            <rect width="36" height="6" rx="1" />
            <rect y="12" width="36" height="6" rx="1" />
            <rect y="24" width="36" height="6" rx="1" />
          </svg>
        </button>
      </div>
    </header>
  );
}

export default function App() {
  return (
    <div className="flex h-screen flex-col overflow-hidden font-['Liberation_Sans',Arial,sans-serif]">
      <BrowserChrome />
      <AppHeader />
      <div className="flex min-h-0 flex-1">
        <Palette />
        <Workspace />
        <div className="flex w-4 shrink-0 items-center justify-center border-b-2 border-l-2 border-[#bbb] bg-[#f3f3f3]">
          <span className="h-[100px] w-1.5 bg-[#ccc]" />
        </div>
        <EditTray />
        <div className="flex w-[14px] shrink-0 items-center justify-center bg-[#f3f3f3]">
          <span className="h-[100px] w-1.5 bg-[#bbb]" />
        </div>
        <Sidebar />
      </div>
    </div>
  );
}
